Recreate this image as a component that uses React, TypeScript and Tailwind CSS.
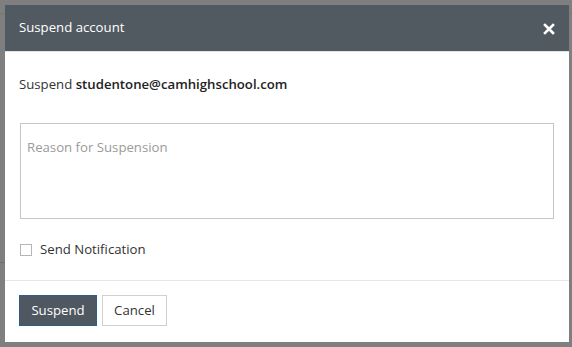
import React from "react";

export default function App() {
  return (
    <div
      className="relative w-[572px] h-[347px] bg-[#7f7f7f] overflow-hidden"
      style={{ fontFamily: '"Open Sans", sans-serif' }}
    >
      <div className="absolute left-0 top-[13px] w-full h-px bg-[#777]" />
      <div className="absolute left-0 top-[262px] w-[5px] h-px bg-[#6f6f6f]" />
      <div className="absolute left-[5px] top-[5px] w-[564px] h-[337px] bg-white flex flex-col">
        <div className="h-[46px] bg-[#525a61] flex items-center justify-between pl-[14px] pr-[14px] border-b border-[#e3e3e3] box-content">
          <span className="text-white text-[13.2px]">Suspend account</span>
          <svg width="12" height="12" viewBox="0 0 12 12" className="mt-[1px]">
            <path d="M2 2 L10 10 M10 2 L2 10" stroke="white" strokeWidth="2.6" strokeLinecap="square" />
          </svg>
        </div>
        <div className="px-[15px] pt-[23px] flex flex-col">
          <div className="text-[13.2px] text-[#333] leading-[18px] -ml-px">
            Suspend <span className="font-semibold text-[#222]">studentone@camhighschool.com</span>
          </div>
          <div className="mt-[30px] h-[96px] border border-[#c6c6c6] px-[6px] pt-[14px] text-[13.2px] text-[#9a9a9a]">
            Reason for Suspension
          </div>
          <div className="mt-[21px] flex items-center gap-[8px]">
            <div className="w-[12px] h-[12px] border border-[#b5b5b5] bg-white" />
            <span className="text-[13.2px] text-[#333]">Send Notification</span>
          </div>
        </div>
        <div className="mt-auto border-t border-[#e6e6e6] h-[62px] px-[14px] pt-[14px] flex items-start gap-[5px]">
          <button className="h-[31px] w-[78px] bg-[#4f5760] border border-[#2d5d8a] text-white text-[13.2px]">
            Suspend
          </button>
          <button className="h-[31px] w-[65px] bg-white border border-[#d0d0d0] text-[#333] text-[13.2px]">
            Cancel
          </button>
        </div>
      </div>
    </div>
  );
}
